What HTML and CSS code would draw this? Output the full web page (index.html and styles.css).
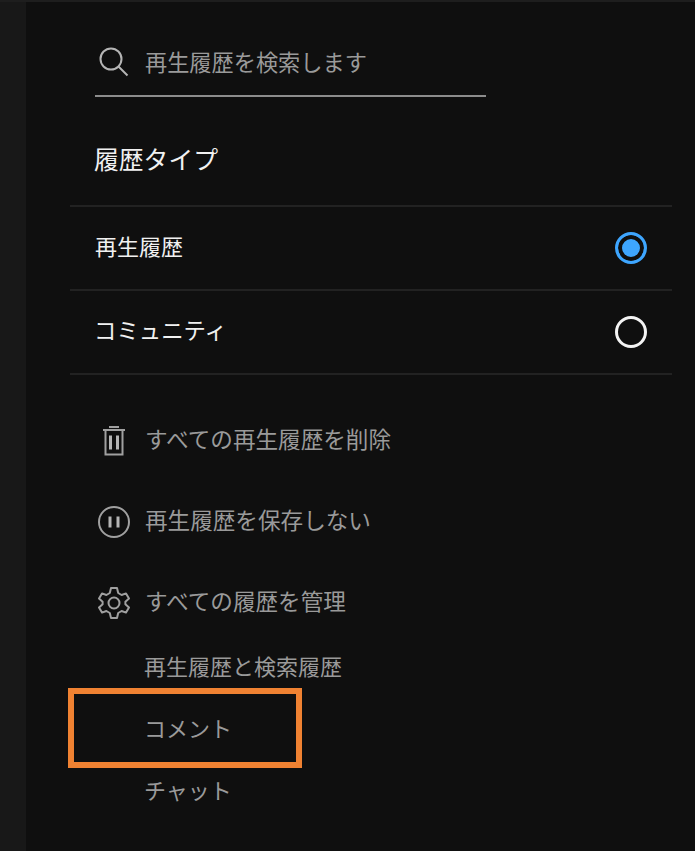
FILE: index.html
```html
<!DOCTYPE html>
<html lang="ja">
<head>
  <meta charset="UTF-8" />
  <title>履歴タイプ</title>
  <link rel="stylesheet" href="styles.css">
</head>
<body>
  <div class="gutter"></div>

  <main class="panel">
    <div class="search">
      <svg class="search-icon" viewBox="0 0 30 30" width="30" height="30">
        <circle cx="12" cy="12" r="10.5" />
        <path d="M19.5 19.5 L28.5 28.5" />
      </svg>
      <span class="search-text">再生履歴を検索します</span>
    </div>

    <h2 class="type-title">履歴タイプ</h2>

    <div class="type-list">
      <div class="type-row">
        <span class="type-label">再生履歴</span>
        <span class="radio radio-on"></span>
      </div>
      <div class="type-row">
        <span class="type-label type-label-wide">コミュニティ</span>
        <span class="radio"></span>
      </div>
    </div>

    <ul class="actions">
      <li class="action">
        <svg class="action-icon" viewBox="0 0 32 32" width="32" height="32">
          <path d="M7.5 5 V29.5 H24.5 V5" />
          <path d="M5 5 H27 M11 2 H21" />
          <path d="M12.5 10.5 V24.5 M19.5 10.5 V24.5" class="thick" />
        </svg>
        <span class="action-text">すべての再生履歴を削除</span>
      </li>
      <li class="action">
        <svg class="action-icon" viewBox="0 0 32 32" width="32" height="32">
          <circle cx="16" cy="16" r="15" />
          <path d="M12 10.5 V21.5 M20 10.5 V21.5" class="thick" />
        </svg>
        <span class="action-text">再生履歴を保存しない</span>
      </li>
      <li class="action">
        <svg class="action-icon" viewBox="0 0 32 32" width="32" height="32">
          <circle cx="16" cy="16" r="5.5" />
          <path class="gear" d="M13 1 H19 L20.2 6 L23.6 8 L28 6.4 L31 11.6 L27.4 14.8 V17.2 L31 20.4 L28 25.6 L23.6 24 L20.2 26 L19 31 H13 L11.8 26 L8.4 24 L4 25.6 L1 20.4 L4.6 17.2 V14.8 L1 11.6 L4 6.4 L8.4 8 L11.8 6 Z" />
        </svg>
        <span class="action-text">すべての履歴を管理</span>
      </li>
    </ul>

    <ul class="sub-links">
      <li>再生履歴と検索履歴</li>
      <li>コメント</li>
      <li>チャット</li>
    </ul>

    <div class="highlight"></div>
  </main>
</body>
</html>
```

FILE: styles.css
```css
* {
  box-sizing: border-box;
}

html, body {
  height: 100%;
}

body {
  margin: 0;
  display: flex;
  background-color: #0f0f0f;
  border-top: 2px solid #1e1e1e;
  font-family: "Noto Sans CJK JP", "Noto Sans", sans-serif;
  overflow: hidden;
}

.gutter {
  width: 26px;
  background-color: #181818;
}

.panel {
  position: relative;
  flex: 1;
  padding: 0 23px 0 44px;
}

.search {
  display: flex;
  align-items: center;
  gap: 16px;
  width: 391px;
  height: 95px;
  margin-left: 25px;
  padding: 26px 0 0 4px;
  border-bottom: 2px solid #8c8c8c;
  color: #9a9a9a;
  font-size: 22.2px;
  line-height: 32px;
}

.search-text {
  padding-bottom: 2px;
}

.search-icon {
  fill: none;
  stroke: #b5b5b5;
  stroke-width: 2;
}

.type-title {
  margin: 0;
  height: 108px;
  padding: 43px 0 0 24px;
  color: #f1f1f1;
  font-size: 24.8px;
  line-height: 36px;
  font-weight: 400;
}

.type-list {
  border-top: 2px solid #222;
}

.type-row {
  display: flex;
  align-items: center;
  justify-content: space-between;
  height: 84px;
  padding: 0 25px;
  border-bottom: 2px solid #222;
}

.type-label {
  padding-bottom: 6px;
  color: #f1f1f1;
  font-size: 22px;
  line-height: 32px;
}

.type-label-wide {
  margin-left: -1px;
  font-size: 22.4px;
}

.radio {
  width: 32px;
  height: 32px;
  border: 3px solid #f4f4f4;
  border-radius: 50%;
}

.radio-on {
  border-color: #3ea6ff;
  background-color: #3ea6ff;
  box-shadow: inset 0 0 0 4px #0f0f0f;
}

.actions,
.sub-links {
  list-style: none;
  margin: 0;
  padding: 0;
}

.actions {
  padding: 25px 0 0 28px;
}

.action {
  display: flex;
  align-items: center;
  gap: 15px;
  height: 81px;
  color: #9a9a9a;
  font-size: 22.6px;
  line-height: 32px;
}

.action-text {
  padding-bottom: 4px;
}

.action-icon {
  fill: none;
  stroke: #a0a0a0;
  stroke-width: 2;
}

.action-icon .thick {
  stroke: #b5b5b5;
  stroke-width: 3;
}

.action-icon .gear {
  stroke-linejoin: round;
}

.sub-links {
  padding: 6px 0 0 74px;
  color: #9a9a9a;
  font-size: 22px;
  line-height: 32px;
}

.sub-links li {
  height: 62px;
}

.highlight {
  position: absolute;
  left: 42px;
  top: 686px;
  width: 234px;
  height: 80px;
  border: 6px solid #f08232;
}
```
